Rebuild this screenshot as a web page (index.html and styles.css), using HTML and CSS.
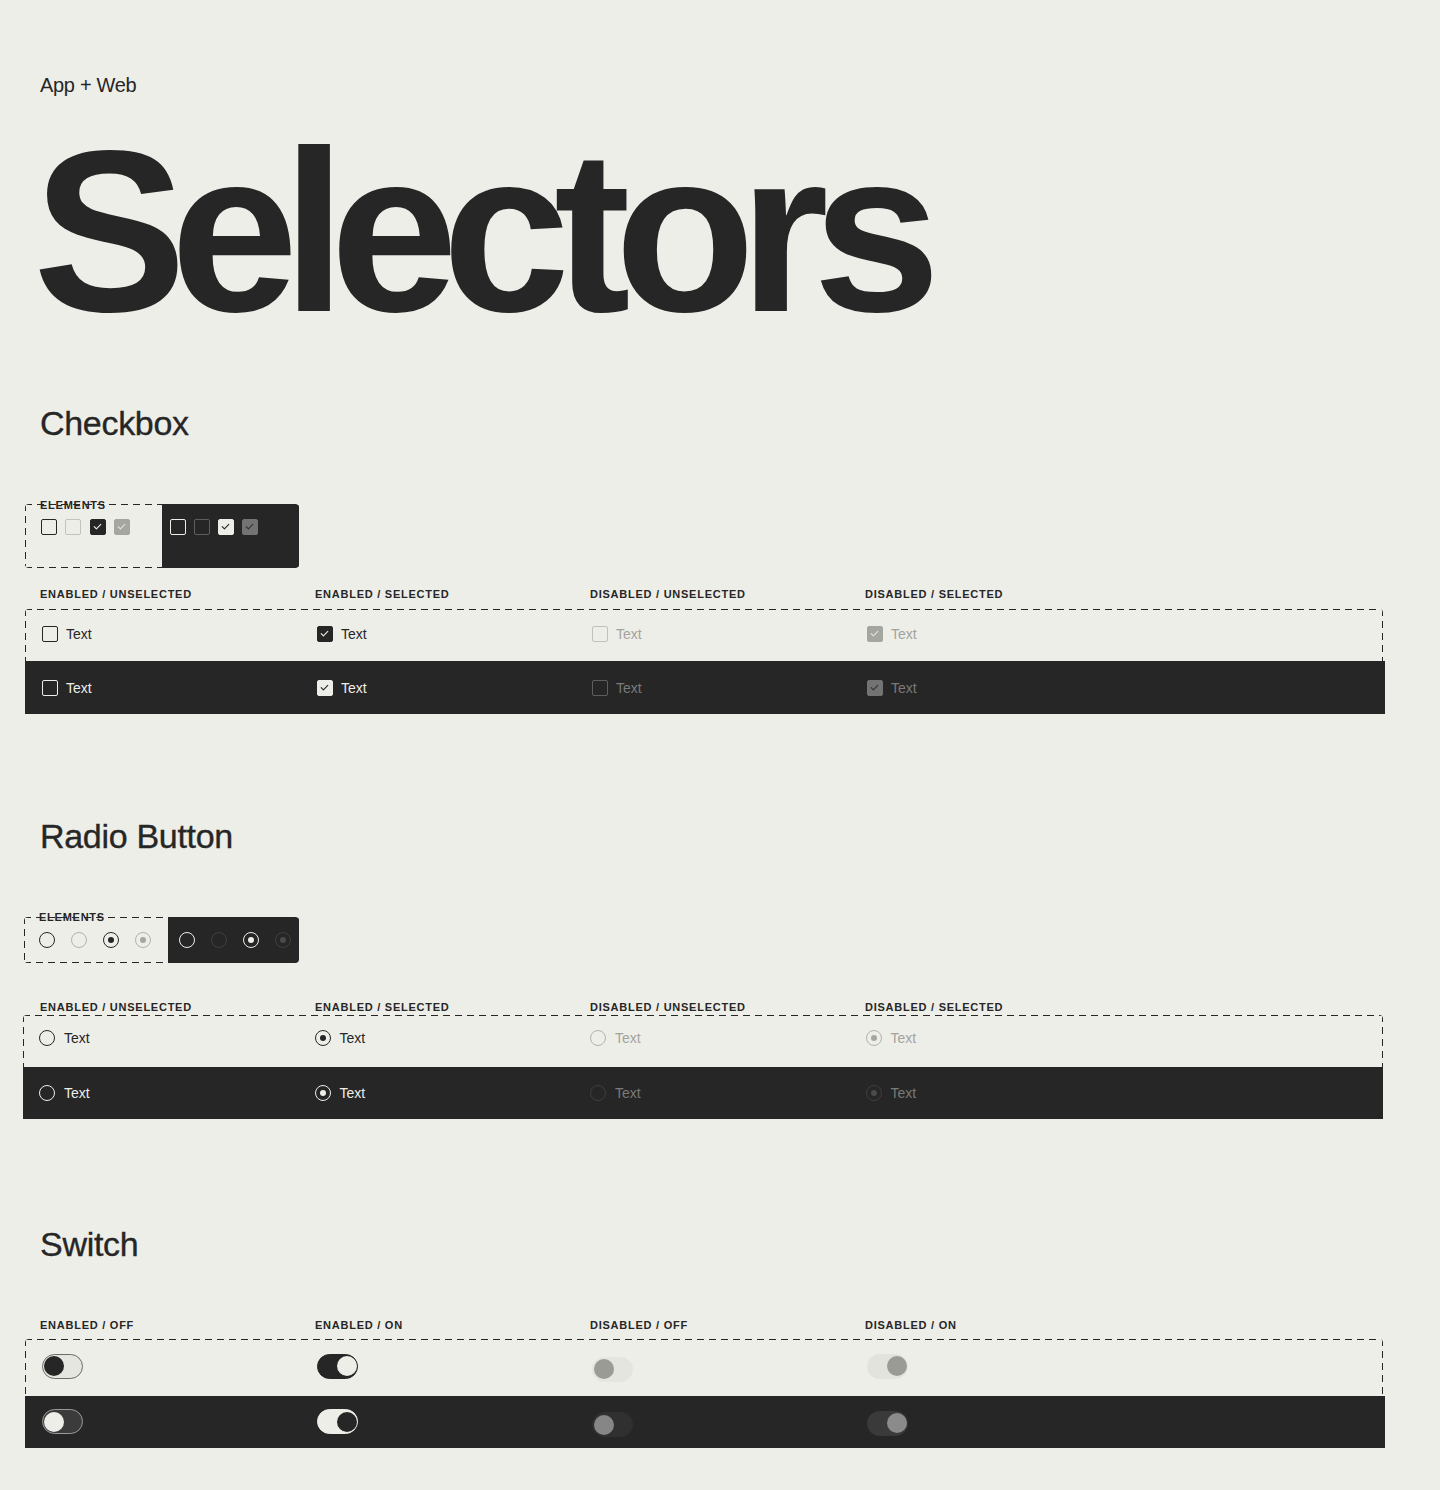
FILE: index.html
```html
<!DOCTYPE html>
<html lang="en">
<head>
<meta charset="utf-8">
<title>Selectors</title>
<link rel="stylesheet" href="styles.css">
</head>
<body>
<div class="page">
  <p class="eyebrow">App + Web</p>
  <h1 class="title">Selectors</h1>

  <section class="sec sec-cb">
    <h2 class="heading">Checkbox</h2>
    <div class="elements el-cb">
      <span class="el-label">Elements</span>
      <div class="el-light">
        <span class="cb"></span>
        <span class="cb cb-dis"></span>
        <span class="cb cb-on"><svg viewBox="1.5 1.5 13 13"><path d="M4.7 8.2 L6.9 10.4 L11.3 5.9"/></svg></span>
        <span class="cb cb-dis-on"><svg viewBox="1.5 1.5 13 13"><path d="M4.7 8.2 L6.9 10.4 L11.3 5.9"/></svg></span>
      </div>
      <div class="el-dark">
        <span class="cb"></span>
        <span class="cb cb-dis"></span>
        <span class="cb cb-on"><svg viewBox="1.5 1.5 13 13"><path d="M4.7 8.2 L6.9 10.4 L11.3 5.9"/></svg></span>
        <span class="cb cb-dis-on"><svg viewBox="1.5 1.5 13 13"><path d="M4.7 8.2 L6.9 10.4 L11.3 5.9"/></svg></span>
      </div>
    </div>
    <div class="labels lab-cb">
      <span>Enabled / Unselected</span>
      <span>Enabled / Selected</span>
      <span>Disabled / Unselected</span>
      <span>Disabled / Selected</span>
    </div>
    <div class="row row-light row-cb">
      <div class="cell"><span class="cb"></span><span class="txt">Text</span></div>
      <div class="cell"><span class="cb cb-on"><svg viewBox="1.5 1.5 13 13"><path d="M4.7 8.2 L6.9 10.4 L11.3 5.9"/></svg></span><span class="txt">Text</span></div>
      <div class="cell dis"><span class="cb cb-dis"></span><span class="txt">Text</span></div>
      <div class="cell dis"><span class="cb cb-dis-on"><svg viewBox="1.5 1.5 13 13"><path d="M4.7 8.2 L6.9 10.4 L11.3 5.9"/></svg></span><span class="txt">Text</span></div>
    </div>
    <div class="row row-dark row-cb-dark">
      <div class="cell"><span class="cb"></span><span class="txt">Text</span></div>
      <div class="cell"><span class="cb cb-on"><svg viewBox="1.5 1.5 13 13"><path d="M4.7 8.2 L6.9 10.4 L11.3 5.9"/></svg></span><span class="txt">Text</span></div>
      <div class="cell dis"><span class="cb cb-dis"></span><span class="txt">Text</span></div>
      <div class="cell dis"><span class="cb cb-dis-on"><svg viewBox="1.5 1.5 13 13"><path d="M4.7 8.2 L6.9 10.4 L11.3 5.9"/></svg></span><span class="txt">Text</span></div>
    </div>
  </section>

  <section class="sec sec-rd">
    <h2 class="heading">Radio Button</h2>
    <div class="elements el-rd">
      <span class="el-label">Elements</span>
      <div class="el-light">
        <span class="rd"></span>
        <span class="rd rd-dis"></span>
        <span class="rd rd-on"></span>
        <span class="rd rd-dis-on"></span>
      </div>
      <div class="el-dark">
        <span class="rd"></span>
        <span class="rd rd-dis"></span>
        <span class="rd rd-on"></span>
        <span class="rd rd-dis-on"></span>
      </div>
    </div>
    <div class="labels lab-rd">
      <span>Enabled / Unselected</span>
      <span>Enabled / Selected</span>
      <span>Disabled / Unselected</span>
      <span>Disabled / Selected</span>
    </div>
    <div class="row row-light row-rd">
      <div class="cell"><span class="rd"></span><span class="txt">Text</span></div>
      <div class="cell"><span class="rd rd-on"></span><span class="txt">Text</span></div>
      <div class="cell dis"><span class="rd rd-dis"></span><span class="txt">Text</span></div>
      <div class="cell dis"><span class="rd rd-dis-on"></span><span class="txt">Text</span></div>
    </div>
    <div class="row row-dark row-rd-dark">
      <div class="cell"><span class="rd"></span><span class="txt">Text</span></div>
      <div class="cell"><span class="rd rd-on"></span><span class="txt">Text</span></div>
      <div class="cell dis"><span class="rd rd-dis"></span><span class="txt">Text</span></div>
      <div class="cell dis"><span class="rd rd-dis-on"></span><span class="txt">Text</span></div>
    </div>
  </section>

  <section class="sec sec-sw">
    <h2 class="heading">Switch</h2>
    <div class="labels lab-sw">
      <span>Enabled / Off</span>
      <span>Enabled / On</span>
      <span>Disabled / Off</span>
      <span>Disabled / On</span>
    </div>
    <div class="row row-light row-sw">
      <div class="cell"><span class="sw sw-off"><span class="thumb"></span></span></div>
      <div class="cell"><span class="sw sw-on"><span class="thumb"></span></span></div>
      <div class="cell"><span class="sw sw-dis-off"><span class="thumb"></span></span></div>
      <div class="cell"><span class="sw sw-dis-on"><span class="thumb"></span></span></div>
    </div>
    <div class="row row-dark row-sw-dark">
      <div class="cell"><span class="sw sw-off"><span class="thumb"></span></span></div>
      <div class="cell"><span class="sw sw-on"><span class="thumb"></span></span></div>
      <div class="cell"><span class="sw sw-dis-off"><span class="thumb"></span></span></div>
      <div class="cell"><span class="sw sw-dis-on"><span class="thumb"></span></span></div>
    </div>
  </section>
</div>
</body>
</html>
```

FILE: styles.css
```css
html, body {
  margin: 0;
  padding: 0;
  background: #eeeee9;
}

body {
  font-family: "Liberation Sans", Arial, sans-serif;
  color: #262626;
}

.page {
  padding: 73px 40px 40px 40px;
  height: 1490px;
  box-sizing: border-box;
}

.eyebrow {
  margin: 0;
  font-size: 20px;
  line-height: 24px;
  letter-spacing: -0.3px;
}

.title {
  margin: 19px 0 0 -7px;
  font-size: 230px;
  line-height: 232px;
  font-weight: 700;
  letter-spacing: -16px;
  color: #262626;
}

.heading {
  margin: 0;
  font-size: 34px;
  line-height: 40px;
  font-weight: 400;
  letter-spacing: -0.3px;
  -webkit-text-stroke: 0.35px #262626;
  color: #262626;
}

.sec-cb .heading { margin-top: 55px; }
.sec-rd .heading { margin-top: 102px; }
.sec-sw .heading { margin-top: 105px; }

/* ---------- dashed helpers ---------- */
.elements {
  position: relative;
  display: flex;
  box-sizing: border-box;
  background:
    repeating-linear-gradient(90deg, #262626 0 7px, transparent 7px 12px) left top / 100% 1px no-repeat,
    repeating-linear-gradient(90deg, #262626 0 7px, transparent 7px 12px) left bottom / 100% 1px no-repeat,
    repeating-linear-gradient(180deg, #262626 0 7px, transparent 7px 12px) left top / 1px 100% no-repeat,
    repeating-linear-gradient(180deg, #262626 0 7px, transparent 7px 12px) right top / 1px 100% no-repeat;
  border-radius: 4px;
}

.el-label {
  position: absolute;
  left: 15px;
  font-size: 11px;
  line-height: 11px;
  font-weight: 700;
  letter-spacing: 0.75px;
  text-transform: uppercase;
  color: #262626;
}

.el-light, .el-dark {
  display: flex;
  align-items: flex-start;
  box-sizing: border-box;
}

.el-dark {
  flex: 1;
  background: #262626;
  border-radius: 0 4px 4px 0;
}

.el-cb {
  margin: 61px 0 0 -15px;
  width: 274px;
  height: 64px;
}
.el-cb .el-label { top: -4px; }
.el-cb .el-light { width: 137px; padding: 15px 0 0 16px; gap: 8.4px; }
.el-cb .el-dark { padding: 15px 0 0 8px; gap: 8px; }

.el-rd {
  margin: 61px 0 0 -16px;
  width: 275px;
  height: 46px;
}
.el-rd .el-label { top: -5.5px; }
.el-rd .el-light { width: 144px; padding: 15px 0 0 15px; gap: 16px; }
.el-rd .el-dark { padding: 15px 0 0 11px; gap: 16px; }

/* ---------- labels ---------- */
.labels {
  display: flex;
  font-size: 11px;
  line-height: 11px;
  font-weight: 700;
  letter-spacing: 0.75px;
  text-transform: uppercase;
  color: #262626;
}
.labels span { width: 275px; flex: none; }

.lab-cb { margin-top: 20.5px; }
.lab-rd { margin-top: 39px; }
.lab-sw { margin-top: 56px; }

/* ---------- rows ---------- */
.row {
  display: flex;
  align-items: center;
  box-sizing: border-box;
}

.row-light {
  background:
    repeating-linear-gradient(90deg, #262626 0 7px, transparent 7px 12px) left top / 100% 1px no-repeat,
    repeating-linear-gradient(180deg, #262626 0 7px, transparent 7px 12px) left top / 1px 100% no-repeat,
    repeating-linear-gradient(180deg, #262626 0 7px, transparent 7px 12px) right top / 1px 100% no-repeat;
  border-radius: 4px 4px 0 0;
}

.row-dark {
  background: #262626;
}

.cell {
  width: 275px;
  flex: none;
  display: flex;
  align-items: center;
  gap: 8px;
}

.txt {
  font-size: 14px;
  line-height: 16px;
  color: #262626;
}
.dis .txt { color: #a3a39e; }
.row-dark .txt { color: #eeeee9; }
.row-dark .dis .txt { color: #7a7a78; }

.row-cb {
  margin: 9.5px 0 0 -15px;
  width: 1358px;
  height: 52px;
  padding: 1px 0 4px 17px;
}
.row-cb-dark {
  margin-left: -15px;
  width: 1360px;
  height: 53px;
  padding-left: 17px;
}

.row-rd {
  margin: 1.5px 0 0 -17px;
  width: 1360px;
  height: 52px;
  padding: 1px 0 7px 16px;
}
.row-rd-dark {
  margin-left: -17px;
  width: 1360px;
  height: 52px;
  padding-left: 16px;
}
.row-rd .cell, .row-rd-dark .cell { gap: 9px; width: 275.5px; }

.row-sw {
  margin: 8px 0 0 -15px;
  width: 1358px;
  height: 57px;
  padding: 1px 0 3px 17px;
}
.row-sw-dark {
  margin-left: -15px;
  width: 1360px;
  height: 52px;
  padding-left: 17px;
}

/* ---------- checkbox ---------- */
.cb {
  width: 16px;
  height: 16px;
  flex: none;
  box-sizing: border-box;
  border: 1.5px solid #262626;
  border-radius: 2px;
  display: block;
}
.cb svg {
  display: block;
  width: 13px;
  height: 13px;
  fill: none;
  stroke: #eeeee9;
  stroke-width: 1.1;
  stroke-linecap: round;
  stroke-linejoin: round;
}
.cb-dis { border-color: #c2c2bd; }
.cb-on { background: #262626; border-color: #262626; }
.cb-dis-on { background: #a6a6a1; border-color: #a6a6a1; }
.cb-dis-on svg { stroke: #e2e2dd; }

.el-dark .cb, .row-dark .cb { border-color: #eeeee9; }
.el-dark .cb-dis, .row-dark .cb-dis { border-color: #5e5e5e; }
.el-dark .cb-on, .row-dark .cb-on { background: #eeeee9; border-color: #eeeee9; }
.el-dark .cb-on svg, .row-dark .cb-on svg { stroke: #262626; }
.el-dark .cb-dis-on, .row-dark .cb-dis-on { background: #737373; border-color: #737373; }
.el-dark .cb-dis-on svg, .row-dark .cb-dis-on svg { stroke: #333333; }

/* ---------- radio ---------- */
.rd {
  width: 16px;
  height: 16px;
  flex: none;
  box-sizing: border-box;
  border: 1.5px solid #262626;
  border-radius: 50%;
  display: flex;
  align-items: center;
  justify-content: center;
}
.rd-on::after, .rd-dis-on::after {
  content: "";
  width: 6px;
  height: 6px;
  border-radius: 50%;
  background: #262626;
}
.rd-dis, .rd-dis-on { border-color: #b3b3ae; }
.rd-dis-on::after { background: #a6a6a1; }

.el-dark .rd, .row-dark .rd { border-color: #eeeee9; }
.el-dark .rd-on::after, .row-dark .rd-on::after { background: #eeeee9; }
.el-dark .rd-dis, .row-dark .rd-dis,
.el-dark .rd-dis-on, .row-dark .rd-dis-on { border-color: #3f3f3f; }
.el-dark .rd-dis-on::after, .row-dark .rd-dis-on::after { background: #4a4a4a; }

/* ---------- switch ---------- */
.sw {
  width: 41px;
  height: 25px;
  flex: none;
  box-sizing: border-box;
  border-radius: 13px;
  border: 1.5px solid transparent;
  display: flex;
  align-items: center;
  padding: 0 0.5px;
}
.thumb {
  width: 20px;
  height: 20px;
  border-radius: 50%;
  display: block;
}
.sw-on, .sw-dis-on { justify-content: flex-end; }

.sw-off { background: #e6e6e0; border-color: #6a6a6a; }
.sw-off .thumb { background: #262626; }
.sw-on { background: #262626; border-color: #262626; }
.sw-on .thumb { background: #eeeee9; }
.sw-dis-off { background: #e5e5df; border-color: #e5e5df; margin-top: 6px; }
.sw-dis-off .thumb { background: #9b9b96; }
.sw-dis-on { background: #e3e3dd; border-color: #e3e3dd; }
.sw-dis-on .thumb { background: #9b9b96; }

.row-dark .sw-off { background: #3b3b3b; border-color: #9a9a9a; }
.row-dark .sw-off .thumb { background: #eeeee9; }
.row-dark .sw-on { background: #eeeee9; border-color: #eeeee9; }
.row-dark .sw-on .thumb { background: #262626; }
.row-dark .sw-dis-off { background: #303030; border-color: #303030; }
.row-dark .sw-dis-off .thumb { background: #868686; }
.row-dark .sw-dis-on { background: #3a3a3a; border-color: #3a3a3a; margin-top: 3px; }
.row-dark .sw-dis-on .thumb { background: #8b8b8b; }
```
